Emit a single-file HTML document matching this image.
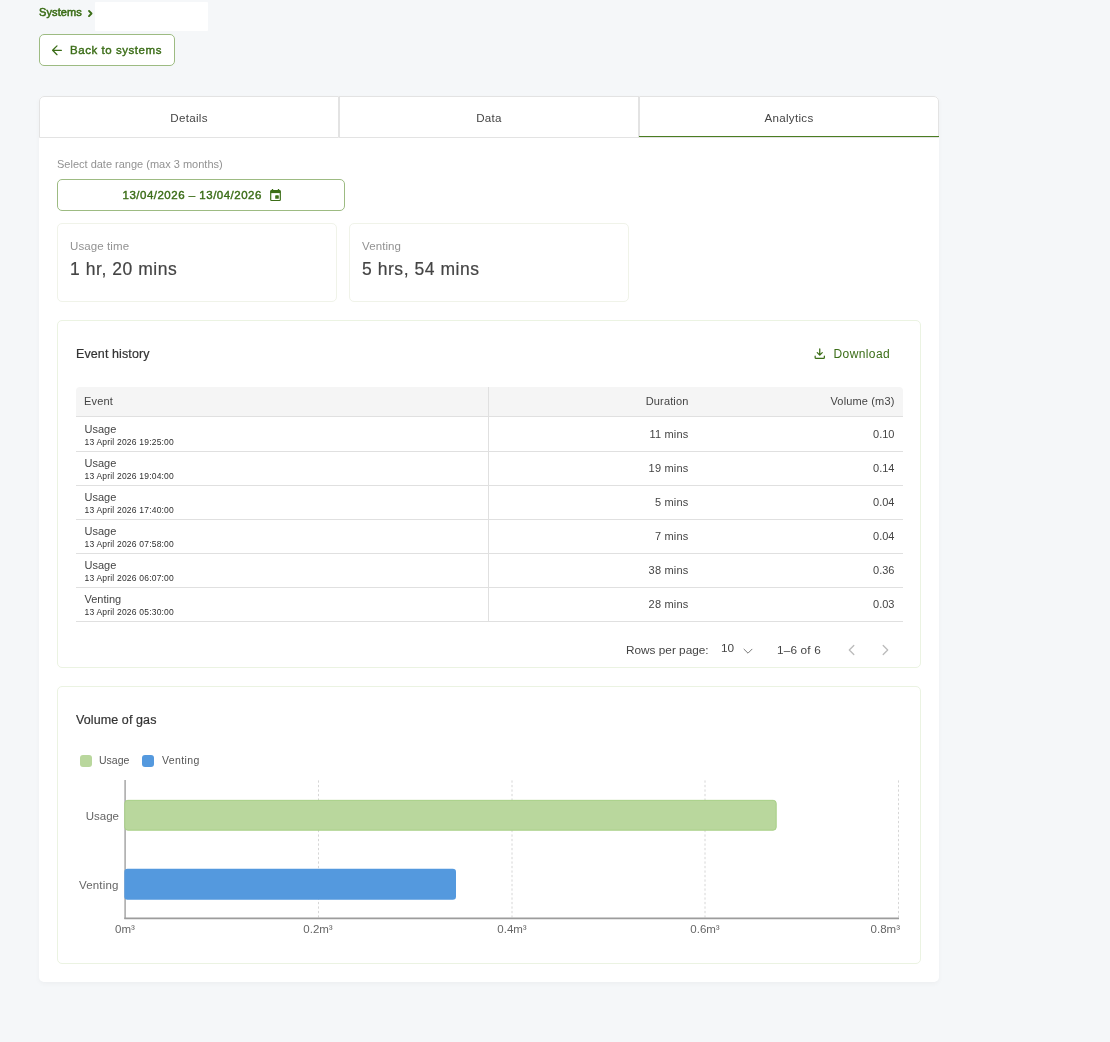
<!DOCTYPE html>
<html lang="en">
<head>
<meta charset="utf-8">
<title>System analytics</title>
<style>
*{box-sizing:border-box;margin:0;padding:0}
html,body{width:1110px;height:1042px;overflow:hidden}
body{background:#f5f7f9;font-family:"Liberation Sans",sans-serif;color:#333;position:relative;font-size:12px}
#root{position:absolute;left:0;top:0;width:1110px;height:1042px;will-change:transform}
.abs{position:absolute}
.green{color:#3b6d17}
.crumb{left:39px;top:5px;font-size:11px;line-height:14px;color:#3b6d17;white-space:nowrap;letter-spacing:.1px;-webkit-text-stroke:.55px #3b6d17}
.redact{left:95px;top:1.500px;width:113px;height:29px;background:#fff;border-radius:1px}
.back{left:39px;top:34px;width:136px;height:32px;border:1px solid #9dbb82;border-radius:5px;background:#fff;color:#3b6d17;font-size:11.5px;line-height:30px;white-space:nowrap;letter-spacing:.55px;-webkit-text-stroke:.4px #3b6d17}
.back svg{position:absolute;left:11px;top:9px}
.back span{position:absolute;left:30px;top:0}
.card{left:39px;top:96px;width:900px;height:886px;background:#fff;border-radius:5px;box-shadow:0 2px 5px rgba(0,0,0,.035)}
.tabs{left:0;top:0;width:900px;height:42px;display:flex}
.tab{flex:1;height:42px;position:relative;border:1px solid #e3e3e3;border-left-width:1px;text-align:center;line-height:42.500px;font-size:11.6px;color:#444;letter-spacing:.3px}
.tab+.tab{border-left:1px solid #e3e3e3}
.tab.first{border-top-left-radius:5px}
.tab.active{border-top-right-radius:5px}
.tab.active:after{content:"";position:absolute;left:-1px;right:-1px;top:38.700px;height:1.400px;background:#4b7d22}
.lbl{left:18px;top:61px;font-size:11px;color:#929292;line-height:14px;white-space:nowrap}
.date{left:18px;top:83px;width:288px;height:32px;border:1px solid #9dbb82;border-radius:5px;color:#3b6d17;font-size:11.5px;line-height:30px;letter-spacing:.5px;white-space:nowrap;-webkit-text-stroke:.4px #3b6d17}
.date span{position:absolute;left:64.500px;top:0}
.date svg{position:absolute;left:211px;top:8px}
.stat{top:127px;width:280px;height:79px;border:1px solid #f0f3e9;border-radius:5px}
.stat .t{position:absolute;left:12px;top:15px;font-size:11.5px;color:#929292;line-height:14px;letter-spacing:.1px;white-space:nowrap}
.stat .v{position:absolute;left:12px;top:33.600px;font-size:17.5px;color:#444;line-height:22px;white-space:nowrap;letter-spacing:.55px;-webkit-text-stroke:.2px #444}
.panel{left:18px;width:864px;border:1px solid #ebf3e2;border-radius:5px}
.ptitle{left:18px;font-size:12.5px;color:#333;line-height:14px;white-space:nowrap;letter-spacing:.1px;-webkit-text-stroke:.2px #333}

.dl{left:756px;top:26px;width:90px;height:14px;color:#3b6d17;font-size:12px;line-height:14px;white-space:nowrap;letter-spacing:.4px}
.dl svg{position:absolute;left:0;top:1px}
.dl span{position:absolute;left:19.500px;top:0}
.thead{left:18px;top:66px;width:827px;height:30px;background:#f5f5f5;border-bottom:1px solid #e0e0e0;border-radius:4px 4px 0 0;font-size:11px;color:#444;line-height:14px;white-space:nowrap;letter-spacing:.15px}
.thead .h1{left:8px;top:7px}
.thead .h2{right:214.500px;top:7px}
.thead .h3{right:8.500px;top:7px}
.row{left:18px;width:827px;height:35px;border-bottom:1px solid #e0e0e0;white-space:nowrap;color:#444}
.row .e1{left:8.500px;top:4.500px;font-size:11px;line-height:14px}
.row .e2{left:8.500px;top:19px;font-size:8.5px;line-height:12px;letter-spacing:.2px;color:#2e2e2e}
.row .c2{right:214.500px;top:10px;font-size:11px;line-height:14px;letter-spacing:.2px}
.row .c3{right:8.500px;top:10px;font-size:11px;line-height:14px}
.vsep{left:430px;top:66px;width:1px;height:235px;background:#e0e0e0}
.pg{left:568px;top:322px;width:280px;height:16px;font-size:11.8px;line-height:14px;color:#444;white-space:nowrap}
.lg{width:12px;height:12px;border-radius:3px}
.lgt{font-size:10.5px;line-height:14px;color:#555;white-space:nowrap}
</style>
</head>
<body>
<div id="root">
<div class="abs crumb">Systems</div>
<svg class="abs" style="left:87px;top:8.600px" width="7" height="9" viewBox="0 0 7 9" fill="none" stroke="#3b6d17" stroke-width="1.900" stroke-linecap="round" stroke-linejoin="round"><path d="M2 1.900L4.500 4.500 2 7.100"/></svg>
<div class="abs redact"></div>
<div class="abs back">
  <svg width="12" height="12" viewBox="0 0 12 12" fill="none" stroke="#3b6d17" stroke-width="1.250" stroke-linecap="round" stroke-linejoin="round"><path d="M10.400 6.300H2M6 1.900L1.600 6.300 6 10.700"/></svg>
  <span>Back to systems</span>
</div>

<div class="abs card">
  <div class="abs tabs">
    <div class="tab first">Details</div>
    <div class="tab">Data</div>
    <div class="tab active">Analytics</div>
  </div>
  <div class="abs lbl">Select date range (max 3 months)</div>
  <div class="abs date"><span>13/04/2026 – 13/04/2026</span><svg width="14" height="14" viewBox="0 0 14 14" fill="none" stroke="#3b6d17"><rect x="1.700" y="2.700" width="9.600" height="9.800" rx="0.800" stroke-width="1.200"/><path d="M1.700 4h9.600" stroke-width="2.200"/><path d="M3.500 0.900v2M9.500 0.900v2" stroke-width="1.300"/><rect x="6.200" y="7.300" width="3.600" height="3.500" rx="0.600" fill="#3b6d17" stroke="none"/></svg></div>

  <div class="abs stat" style="left:18px"><div class="t">Usage time</div><div class="v">1 hr, 20 mins</div></div>
  <div class="abs stat" style="left:310px"><div class="t">Venting</div><div class="v">5 hrs, 54 mins</div></div>

  <div class="abs panel" id="events" style="top:224px;height:348px">
    <div class="abs ptitle" style="top:26.400px">Event history</div>
    <div class="abs dl"><svg width="11.500" height="11.500" viewBox="0 0 12 12" fill="none" stroke="#3b6d17" stroke-width="1.3" stroke-linecap="round" stroke-linejoin="round"><path d="M6 1v6.2M3.4 4.8L6 7.4l2.6-2.6M1.2 8.6v1.2a1 1 0 0 0 1 1h7.6a1 1 0 0 0 1-1V8.6"/></svg><span>Download</span></div>
    <div class="abs thead"><span class="abs h1">Event</span><span class="abs h2">Duration</span><span class="abs h3">Volume (m3)</span></div>
    <div class="abs row" style="top:96px"><span class="abs e1">Usage</span><span class="abs e2">13 April 2026 19:25:00</span><span class="abs c2">11 mins</span><span class="abs c3">0.10</span></div>
    <div class="abs row" style="top:130px"><span class="abs e1">Usage</span><span class="abs e2">13 April 2026 19:04:00</span><span class="abs c2">19 mins</span><span class="abs c3">0.14</span></div>
    <div class="abs row" style="top:164px"><span class="abs e1">Usage</span><span class="abs e2">13 April 2026 17:40:00</span><span class="abs c2">5 mins</span><span class="abs c3">0.04</span></div>
    <div class="abs row" style="top:198px"><span class="abs e1">Usage</span><span class="abs e2">13 April 2026 07:58:00</span><span class="abs c2">7 mins</span><span class="abs c3">0.04</span></div>
    <div class="abs row" style="top:232px"><span class="abs e1">Usage</span><span class="abs e2">13 April 2026 06:07:00</span><span class="abs c2">38 mins</span><span class="abs c3">0.36</span></div>
    <div class="abs row" style="top:266px"><span class="abs e1">Venting</span><span class="abs e2">13 April 2026 05:30:00</span><span class="abs c2">28 mins</span><span class="abs c3">0.03</span></div>
    <div class="abs vsep"></div>
    <div class="abs pg">
<span class="abs" style="left:0;top:0">Rows per page:</span>
<span class="abs" style="left:95px;top:-2px">10</span>
<svg class="abs" style="left:115.500px;top:1.500px" width="12" height="12" viewBox="0 0 12 12" fill="none" stroke="#7a7a7a" stroke-width="1" stroke-linecap="round" stroke-linejoin="round"><path d="M2 4.2l4 4 4-4"/></svg>
<span class="abs" style="left:151px;top:0;letter-spacing:.15px">1–6 of 6</span>
<svg class="abs" style="left:220px;top:0.500px" width="12" height="12" viewBox="0 0 12 12" fill="none" stroke="#bbb" stroke-width="1.3" stroke-linecap="round" stroke-linejoin="round"><path d="M7.8 1.5L3.3 6l4.5 4.5"/></svg>
<svg class="abs" style="left:252.500px;top:0.500px" width="12" height="12" viewBox="0 0 12 12" fill="none" stroke="#bbb" stroke-width="1.3" stroke-linecap="round" stroke-linejoin="round"><path d="M4.2 1.5L8.7 6l-4.5 4.5"/></svg>
</div>
  </div>

  <div class="abs panel" id="volume" style="top:590px;height:278px">
    <div class="abs ptitle" style="top:26.400px">Volume of gas</div>
    <div class="abs lg" style="left:22px;top:68px;background:#b9d79d"></div><span class="abs lgt" style="left:41px;top:66px">Usage</span>
    <div class="abs lg" style="left:84px;top:68px;background:#5499de"></div><span class="abs lgt" style="left:104px;top:66px;letter-spacing:.4px">Venting</span>
    <svg class="abs" style="left:0;top:0" width="862" height="276" viewBox="0 0 862 276">
      <g stroke="#d6d6d6" stroke-width="1" stroke-dasharray="2.300 2.200">
        <path d="M260.500 93.400v137M454 93.400v137M647 93.400v137M840.500 93.400v137"/>
      </g>
      <path d="M67.100 93v139" stroke="#a6a6a6" stroke-width="1.500" fill="none"/>
      <path d="M66.300 231.350H841" stroke="#9c9c9c" stroke-width="1.700" fill="none"/>
      <rect x="66.800" y="113.350" width="651.400" height="29.850" rx="3" fill="#b9d79d" stroke="#a7cf86"/>
      <rect x="66.300" y="181.700" width="331.700" height="31.100" rx="3.300" fill="#5499de"/>
      <g font-family="Liberation Sans, sans-serif" font-size="11.500" fill="#666">
        <text x="61" y="133" text-anchor="end">Usage</text>
        <text x="60.500" y="202" text-anchor="end" letter-spacing=".15">Venting</text>
      </g>
      <g font-family="Liberation Sans, sans-serif" font-size="11.500" fill="#666">
        <text x="67" y="246" text-anchor="middle">0m³</text>
        <text x="260" y="246" text-anchor="middle">0.2m³</text>
        <text x="454" y="246" text-anchor="middle">0.4m³</text>
        <text x="647" y="246" text-anchor="middle">0.6m³</text>
        <text x="842" y="246" text-anchor="end">0.8m³</text>
      </g>
    </svg>
  </div>
</div>
</div>
</body>
</html>
